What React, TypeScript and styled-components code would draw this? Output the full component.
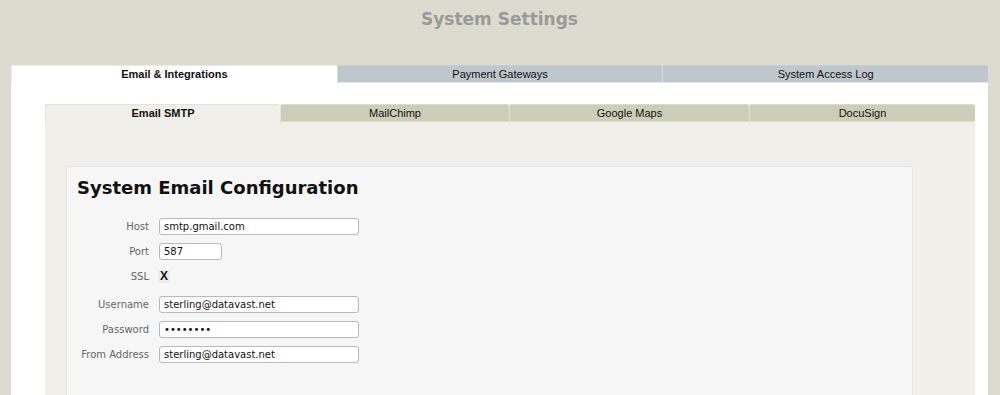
import React from "react";
import styled, { createGlobalStyle } from "styled-components";

const GlobalStyle = createGlobalStyle`
  html, body {
    margin: 0;
    padding: 0;
    overflow: hidden;
    background: #dbdccf;
    font-family: "Liberation Sans", Arial, sans-serif;
  }
`;

const Page = styled.div`
  padding: 0 12px 0 11px;
`;

const Title = styled.h1`
  margin: 0;
  height: 65px;
  padding-top: 9px;
  box-sizing: border-box;
  text-align: center;
  font-family: "DejaVu Sans", Verdana, sans-serif;
  font-size: 17px;
  font-weight: bold;
  color: #9a9a9a;
`;

const TabRow = styled.div`
  display: flex;
`;

const MainTab = styled.div<{ $active?: boolean }>`
  flex: 1;
  height: 16px;
  line-height: 16px;
  text-align: center;
  font-size: 11px;
  color: #111;
  font-weight: ${(p) => (p.$active ? "bold" : "normal")};
  background: ${(p) => (p.$active ? "#fff" : "#bfc6cc")};
  border-top: 1px solid ${(p) => (p.$active ? "#ecece6" : "#c7cdd2")};
  border-left: 1px solid ${(p) => (p.$active ? "#ecece6" : "#d8dde0")};
  border-bottom: 1px solid ${(p) => (p.$active ? "#fff" : "#e4e7ea")};
  border-radius: 2px 2px 0 0;
  box-sizing: content-box;
`;

const MainPanel = styled.div`
  background: #fff;
  padding: 21px 13px 0 34px;
  height: 400px;
`;

const SubTab = styled.div<{ $active?: boolean; $w: number }>`
  flex: 0 0 ${(p) => p.$w}px;
  box-sizing: border-box;
  height: 18px;
  line-height: 17px;
  text-align: center;
  font-size: 11px;
  color: #111;
  font-weight: ${(p) => (p.$active ? "bold" : "normal")};
  background: ${(p) => (p.$active ? "#f0efea" : "#cdcdb9")};
  border-top: 1px solid ${(p) => (p.$active ? "#e4e4de" : "#dcdcce")};
  border-left: 1px solid ${(p) => (p.$active ? "#e4e4de" : "#e2e2d6")};
  border-bottom: 1px solid ${(p) => (p.$active ? "#f0efea" : "#dedcd2")};
  border-radius: 2px 2px 0 0;
`;

const SubPanel = styled.div`
  background: #f0efea;
  padding: 44px 0 0 21px;
  height: 400px;
`;

const Fieldset = styled.section`
  width: 847px;
  box-sizing: border-box;
  background: #f6f6f6;
  border: 1px solid #e6e6e3;
  border-radius: 2px;
  padding: 10px 10px 40px;
  height: 300px;
`;

const Heading = styled.h2`
  margin: 0 0 20px;
  font-family: "DejaVu Sans", Verdana, sans-serif;
  font-size: 18px;
  font-weight: bold;
  color: #111;
`;

const Form = styled.div`
  display: grid;
  grid-template-columns: 72px auto;
  column-gap: 10px;
  row-gap: 8px;
  align-items: center;
  justify-items: start;
`;

const Label = styled.label<{ $gapBelow?: boolean }>`
  justify-self: end;
  font-family: "DejaVu Sans", Verdana, sans-serif;
  font-size: 10px;
  color: #666;
  margin-bottom: ${(p) => (p.$gapBelow ? "3px" : "0")};
`;

const Input = styled.input<{ $w?: number }>`
  width: ${(p) => p.$w ?? 200}px;
  height: 17px;
  box-sizing: border-box;
  border: 1px solid #b9b9b9;
  border-radius: 3px;
  background: #fff;
  padding: 0 4px;
  font-family: "DejaVu Sans", Verdana, sans-serif;
  font-size: 10px;
  color: #111;
  outline: none;
`;

const Check = styled.span`
  display: inline-block;
  width: 12px;
  height: 13px;
  margin: 2px 0 5px -1px;
  background: #ececec;
  font-family: "Liberation Sans", Arial, sans-serif;
  font-size: 12px;
  font-weight: bold;
  line-height: 13px;
  text-align: center;
  color: #111;
`;

export default function App() {
  return (
    <>
      <GlobalStyle />
      <Page>
        <Title>System Settings</Title>
        <TabRow>
          <MainTab $active>Email &amp; Integrations</MainTab>
          <MainTab>Payment Gateways</MainTab>
          <MainTab>System Access Log</MainTab>
        </TabRow>
        <MainPanel>
          <TabRow>
            <SubTab $active $w={235}>Email SMTP</SubTab>
            <SubTab $w={229}>MailChimp</SubTab>
            <SubTab $w={240}>Google Maps</SubTab>
            <SubTab $w={226}>DocuSign</SubTab>
          </TabRow>
          <SubPanel>
            <Fieldset>
              <Heading>System Email Configuration</Heading>
              <Form>
                <Label>Host</Label>
                <Input defaultValue="smtp.gmail.com" />
                <Label>Port</Label>
                <Input $w={63} defaultValue="587" />
                <Label $gapBelow>SSL</Label>
                <Check>X</Check>
                <Label>Username</Label>
                <Input defaultValue="sterling@datavast.net" />
                <Label>Password</Label>
                <Input type="password" defaultValue="password" />
                <Label>From Address</Label>
                <Input defaultValue="sterling@datavast.net" />
              </Form>
            </Fieldset>
          </SubPanel>
        </MainPanel>
      </Page>
    </>
  );
}
